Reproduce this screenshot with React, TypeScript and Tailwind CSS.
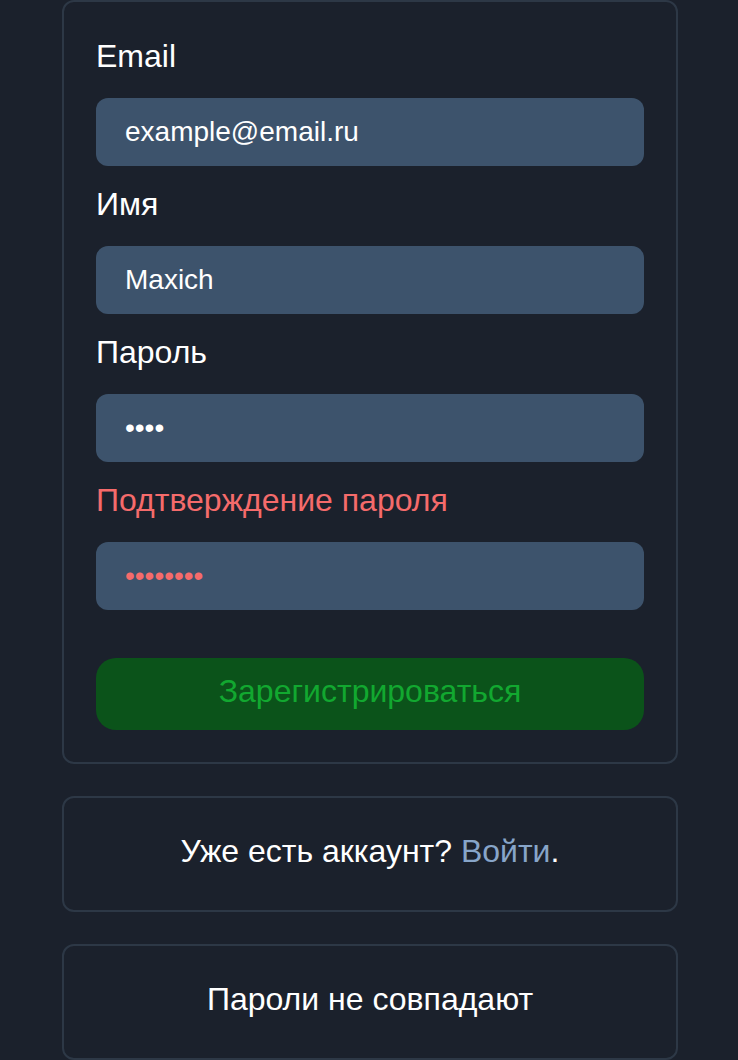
import { useState } from "react";

const fields = [
  { id: "email", label: "Email", type: "text", value: "example@email.ru", error: false },
  { id: "name", label: "Имя", type: "text", value: "Maxich", error: false },
  { id: "password", label: "Пароль", type: "password", value: "1234", error: false },
  { id: "confirm", label: "Подтверждение пароля", type: "password", value: "12345678", error: true },
];

export default function App() {
  const [values, setValues] = useState<Record<string, string>>(
    Object.fromEntries(fields.map((f) => [f.id, f.value]))
  );

  return (
    <div className="min-h-[1060px] bg-[#1b212c] font-['Liberation_Sans',Arial,sans-serif]">
      <div className="ml-[62px] flex w-[616px] flex-col gap-8 pb-8">
        <form
          className="flex flex-col rounded-xl border-2 border-[#2d3846] p-8"
          onSubmit={(e) => e.preventDefault()}
        >
          {fields.map((f) => (
            <div key={f.id} className="mb-4 flex flex-col">
              <label
                htmlFor={f.id}
                className={`mt-[2px] mb-[22px] text-[32px] leading-[40px] ${f.error ? "text-[#f56b6b]" : "text-white"}`}
              >
                {f.label}
              </label>
              <input
                id={f.id}
                type={f.type}
                value={values[f.id]}
                onChange={(e) => setValues({ ...values, [f.id]: e.target.value })}
                className={`h-[68px] rounded-xl bg-[#3d536c] px-[29px] text-[28px] outline-none ${f.error ? "text-[#f56b6b]" : "text-white"}`}
              />
            </div>
          ))}
          <button
            type="submit"
            className="mt-8 h-[72px] rounded-[20px] bg-[#0b531a] pb-[6px] text-[32px] text-[#12a830]"
          >
            Зарегистрироваться
          </button>
        </form>

        <div className="rounded-xl border-2 border-[#2d3846] pt-[29px] pb-[35px] text-center text-[32px] leading-[48px] text-white">
          Уже есть аккаунт? <a href="#" className="text-[#87a5c9]">Войти</a>.
        </div>

        <div className="rounded-xl border-2 border-[#2d3846] pt-[29px] pb-[35px] text-center text-[32px] leading-[48px] text-white">
          Пароли не совпадают
        </div>
      </div>
    </div>
  );
}
